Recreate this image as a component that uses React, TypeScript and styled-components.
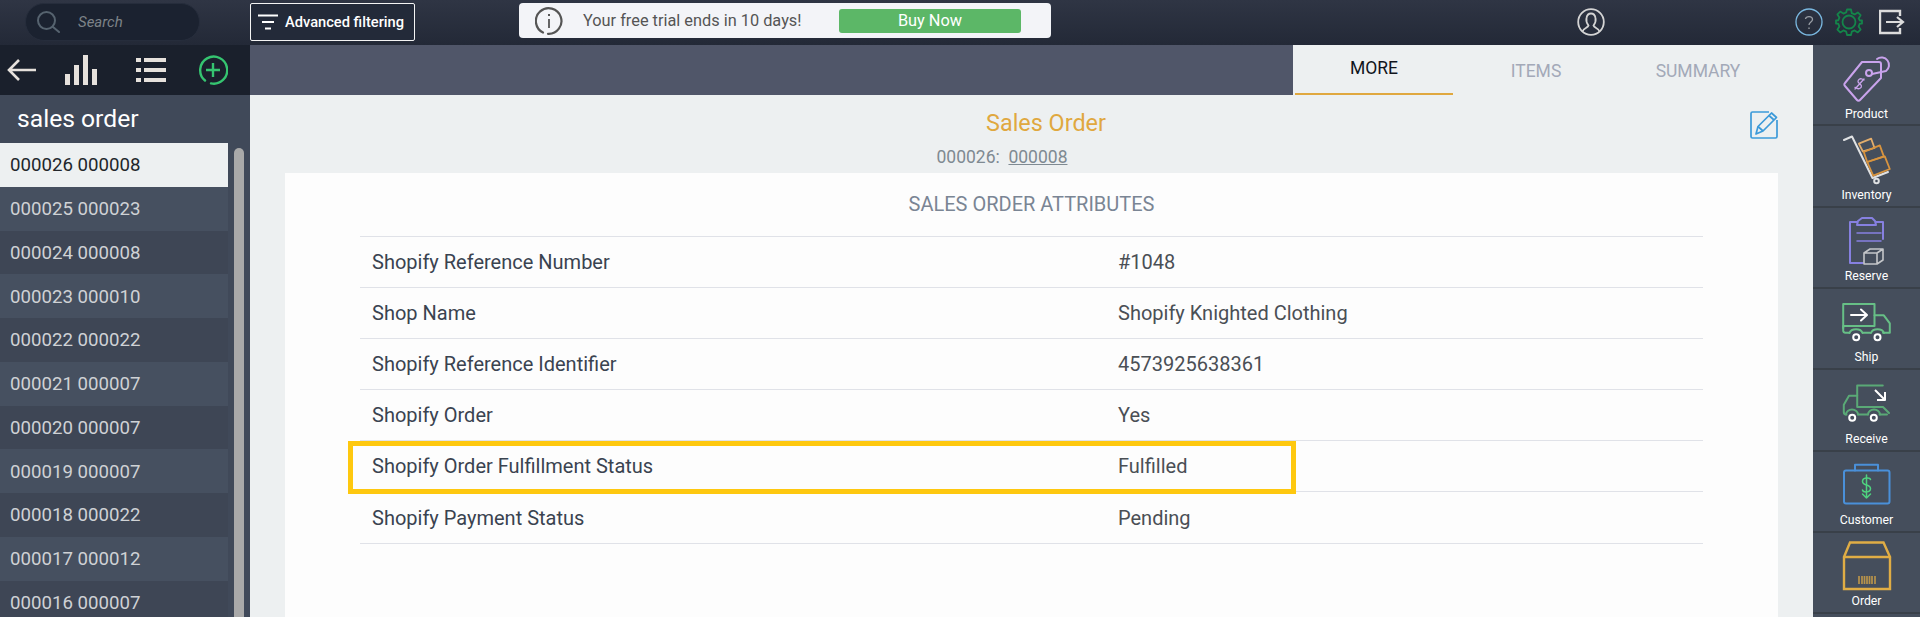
import React from "react";
import styled, { createGlobalStyle } from "styled-components";

const Global = createGlobalStyle`
  html, body { margin: 0; padding: 0; height: 617px; overflow: hidden; background: #edf0f1; }
  body { font-family: Roboto, "Liberation Sans", sans-serif; }
  * { box-sizing: border-box; }
`;

const Page = styled.div`
  width: 1920px;
  height: 617px;
  display: flex;
  flex-direction: column;
  overflow: hidden;
`;

const Header = styled.header`
  height: 45px;
  flex: none;
  display: flex;
  align-items: flex-start;
  background: linear-gradient(#2f3544, #232937);
`;

const SearchPill = styled.div`
  width: 175px;
  height: 38px;
  margin: 3px 0 0 25px;
  border-radius: 19px;
  background: #1b2230;
  border: 1px solid #262d3c;
  display: flex;
  align-items: center;
  padding-left: 10px;
  gap: 18px;
`;

const SearchText = styled.span`
  color: #7d8288;
  font-size: 15px;
  font-style: italic;
`;

const FilterButton = styled.button`
  width: 165px;
  height: 38px;
  margin: 3px 0 0 50px;
  padding: 0 0 0 7px;
  display: flex;
  align-items: center;
  gap: 7px;
  background: #232a39;
  border: 1px solid #f4f4f4;
  border-radius: 2px;
  color: #fff;
  font: 500 14.67px Roboto, sans-serif;
`;

const Banner = styled.div`
  width: 532px;
  height: 35px;
  margin: 3px 0 0 104px;
  padding-left: 16px;
  background: #f3f4f8;
  border-radius: 4px;
  display: flex;
  align-items: center;
`;

const BannerText = styled.span`
  margin-left: 20px;
  width: 256px;
  font-size: 16.33px;
  color: #555;
`;

const BuyButton = styled.button`
  width: 182px;
  height: 24px;
  border: 0;
  border-radius: 3px;
  background: #5cb767;
  color: #fff;
  font: 400 16.33px Roboto, sans-serif;
`;

const HeaderIcon = styled.svg<{ $left: number; $top?: number }>`
  flex: none;
  margin-left: ${(p) => p.$left}px;
  margin-top: ${(p) => p.$top ?? 8}px;
`;

const Body = styled.div`
  flex: 1;
  min-height: 0;
  display: flex;
`;

const Sidebar = styled.aside`
  width: 250px;
  flex: none;
  display: flex;
  flex-direction: column;
  background: #404959;
`;

const SideTools = styled.div`
  height: 50px;
  flex: none;
  background: #1a202c;
  display: flex;
  align-items: center;
`;

const ToolIcon = styled.svg<{ $left: number }>`
  flex: none;
  margin-left: ${(p) => p.$left}px;
`;

const SideTitle = styled.h2`
  height: 48px;
  flex: none;
  margin: 0;
  padding: 6px 0 0 17px;
  font-size: 24.67px;
  line-height: 36px;
  font-weight: 400;
  color: #fff;
`;

const ListArea = styled.div`
  flex: 1;
  min-height: 0;
  display: flex;
  overflow: hidden;
`;

const Rows = styled.div`
  width: 228px;
  flex: none;
`;

const OrderRow = styled.div<{ $selected?: boolean; $dark?: boolean }>`
  height: 43.75px;
  padding: 1px 0 0 10px;
  display: flex;
  align-items: center;
  font-size: 18.67px;
  color: ${(p) => (p.$selected ? "#22262b" : "#cfd2d5")};
  background: ${(p) => (p.$selected ? "#edf0f1" : p.$dark ? "#3e4655" : "#465060")};
`;

const Scrollbar = styled.div`
  width: 10px;
  margin: 5px 0 0 6px;
  height: 600px;
  flex: none;
  background: #a9a9a9;
  border-radius: 5px 5px 0 0;
`;

const Main = styled.main`
  flex: 1;
  min-width: 0;
  display: flex;
  flex-direction: column;
  background: #edf0f1;
`;

const TabBar = styled.div`
  height: 50px;
  flex: none;
  display: flex;
  background: #505669;
  padding-left: 1043px;
`;

const Tabs = styled.div`
  flex: 1;
  display: flex;
  gap: 4px;
  background: #edf0f1;
  padding-left: 2px;
`;

const Tab = styled.div<{ $active?: boolean }>`
  width: 158px;
  height: 50px;
  display: flex;
  align-items: center;
  justify-content: center;
  padding: ${(p) => (p.$active ? "0 0 2px" : "4px 0 0")};
  font-size: 17.5px;
  color: ${(p) => (p.$active ? "#11151c" : "#a3a9b8")};
  border-bottom: 2px solid ${(p) => (p.$active ? "#e0a83f" : "transparent")};
`;

const Heading = styled.div`
  height: 78px;
  flex: none;
  padding: 15px 35px 0;
  display: grid;
  grid-template-columns: 1fr auto 1fr;
  align-items: start;
`;

const HeadingCenter = styled.div`
  grid-column: 2;
  display: flex;
  flex-direction: column;
  align-items: center;
`;

const DocTitle = styled.h1`
  margin: 0 0 0 29px;
  font-size: 23.4px;
  line-height: 26px;
  font-weight: 400;
  color: #e0a83f;
`;

const DocSub = styled.div`
  margin: 12px 59px 0 0;
  font-size: 17.5px;
  line-height: 19px;
  color: #7f8a92;
  white-space: pre;
`;

const DocLink = styled.span`
  text-decoration: underline;
`;

const EditIcon = styled.svg`
  grid-column: 3;
  justify-self: end;
  margin-top: 1px;
`;

const Card = styled.section`
  flex: 1;
  min-height: 0;
  margin: 0 35px;
  padding: 0 75px;
  background: #fdfdfd;
`;

const CardTitle = styled.div`
  height: 63.5px;
  display: flex;
  align-items: center;
  justify-content: center;
  font-size: 20px;
  color: #7a8594;
  border-bottom: 1px solid #e0e2e8;
`;

const AttrTable = styled.div`
  position: relative;
`;

const AttrRow = styled.div`
  height: 51.2px;
  display: grid;
  grid-template-columns: 746px 1fr;
  align-items: center;
  padding-left: 12px;
  font-size: 20px;
  color: #3a4350;
  border-bottom: 1px solid #e0e2e8;
  &:last-of-type {
    border-bottom: 2px solid #dfe3e8;
  }
`;

const AttrValue = styled.span`
  color: #4a4f55;
`;

const Highlight = styled.div<{ $row: number }>`
  position: absolute;
  left: -12px;
  top: ${(p) => p.$row * 51.2 - 0.4}px;
  width: 948px;
  height: 53px;
  border: 5px solid #fec80f;
`;

const Rail = styled.nav`
  width: 107px;
  flex: none;
  background: #454e5c;
`;

const RailItem = styled.div`
  height: 81.33px;
  display: flex;
  flex-direction: column;
  align-items: center;
  border-bottom: 2px solid #394049;
`;

const RailIcon = styled.svg`
  flex: none;
  display: block;
`;

const RailLabel = styled.span`
  font-size: 12.25px;
  font-weight: 400;
  line-height: 16px;
  color: #fff;
  margin-top: 0.5px;
`;

const orders = [
  "000026 000008",
  "000025 000023",
  "000024 000008",
  "000023 000010",
  "000022 000022",
  "000021 000007",
  "000020 000007",
  "000019 000007",
  "000018 000022",
  "000017 000012",
  "000016 000007",
];

const attrs = [
  ["Shopify Reference Number", "#1048"],
  ["Shop Name", "Shopify Knighted Clothing"],
  ["Shopify Reference Identifier", "4573925638361"],
  ["Shopify Order", "Yes"],
  ["Shopify Order Fulfillment Status", "Fulfilled"],
  ["Shopify Payment Status", "Pending"],
];

const Stroke = (c: string, w = 2) => ({ fill: "none", stroke: c, strokeWidth: w, strokeLinejoin: "round" as const, strokeLinecap: "round" as const });

const ProductIcon = () => (
  <RailIcon width="60" height="60" viewBox="0 0 60 60">
    <g {...Stroke("#c9a3ec")}>
      <path d="M25 17H42a2 2 0 0 1 2 2V33L23 55a2 2 0 0 1-3 0L8 41a2 2 0 0 1 0-3Z" />
      <path d="M40 14a7.500 7.500 0 1 1 9 12L35 29" />
      <circle cx="32" cy="28" r="3" />
      <path d="M27 35l-2-1c-2-.8-4 .6-4 2.400 0 2 3 2.600 3.400 4.400.4 2-2.400 3.600-4.400 2.600l-2-1M27 34l-9 10" strokeWidth="1.300" />
    </g>
  </RailIcon>
);

const InventoryIcon = () => (
  <RailIcon width="60" height="60" viewBox="0 0 60 60">
    <g {...Stroke("#dfe1e3")}>
      <path d="M7 14L15 10.500L35.500 52L51 46" />
      <circle cx="39.500" cy="55" r="2.300" />
    </g>
    <g {...Stroke("#d8943f", 1.8)}>
      <path d="M21.800 17.700L34.200 12.700L37.500 22L25.800 25.400Z" stroke="#e2ad6c" />
      <path d="M26.800 26L42.800 19.400L46.800 30.400L30.200 36Z" />
      <path d="M30.200 36L47.800 30.400L52.800 43L36.200 49.700Z" />
    </g>
  </RailIcon>
);

const ReserveIcon = () => (
  <RailIcon width="60" height="60" viewBox="0 0 60 60">
    <g {...Stroke("#8680e0")}>
      <path d="M20 14H13V55H26M39 14H46V31" />
      <path d="M20 17L21 13L25 10H35L38 13L39 17Z" />
      <path d="M20 25H44M20 33H44" strokeWidth="1.500" />
    </g>
    <g {...Stroke("#c4c6c9", 1.6)}>
      <path d="M27 45L33 41H46L40 45ZM27 45V56H40V45M40 56L46 52V41" />
    </g>
  </RailIcon>
);

const ShipIcon = () => (
  <RailIcon width="60" height="60" viewBox="0 0 60 60">
    <g {...Stroke("#67bf86")}>
      <path d="M6.200 39V15H37.500V37H6.200" />
      <path d="M37.500 26.300H46.800L52.800 34.300V43.700H46M33 43.700H26M12.500 43.700H8A2 2 0 0 1 6.200 42V37" />
      <path d="M12.500 44a6.700 5 0 0 1 13 0M34 44a6.700 5 0 0 1 13 0" />
    </g>
    <g {...Stroke("#fff")}>
      <circle cx="19.200" cy="48.300" r="3" />
      <circle cx="40.500" cy="48.300" r="3" />
      <path d="M14 26H29M24 20.500L30 26L24 31.500" />
    </g>
  </RailIcon>
);

const ReceiveIcon = () => (
  <RailIcon width="60" height="60" viewBox="0 0 60 60">
    <g {...Stroke("#5aa976")}>
      <path d="M45.800 15.400H20.200V37H46L52 43" />
      <path d="M20.200 25.700H12L6.800 34.700V42A2.500 2.500 0 0 0 9 44.500H9.500M21 44.500H31M42.500 44.500H50" />
      <path d="M9 44.500a6 5 0 0 1 12 0M31 44.500a6 5 0 0 1 12 0" />
    </g>
    <g {...Stroke("#fff")}>
      <circle cx="15.200" cy="47.700" r="3" />
      <circle cx="36.800" cy="47.700" r="3" />
      <path d="M38 20L48 30M48 22V30H40" strokeLinecap="butt" />
    </g>
  </RailIcon>
);

const CustomerIcon = () => (
  <RailIcon width="60" height="60" viewBox="0 0 60 60">
    <g {...Stroke("#4a90d9")}>
      <rect x="7" y="18.500" width="45.500" height="33" rx="2" />
      <path d="M18 18.500V12.700H41V18.500" />
    </g>
    <g {...Stroke("#4fd27f", 1.5)}>
      <path d="M29.500 23V46M25.500 42L29.500 46L33.500 42" />
      <path d="M33.500 27.500C33 25.500 25.500 25 25.500 29.500C25.500 34 33.500 32 33.500 36.500C33.500 41 26 40.500 25.500 38" />
    </g>
  </RailIcon>
);

const OrderIcon = () => (
  <RailIcon width="60" height="60" viewBox="0 0 60 60">
    <g {...Stroke("#e0ad45", 2.4)} strokeLinejoin="miter">
      <path d="M7 24L13 9.500H46.500L53 24V56H7Z" />
      <path d="M7 24H53" />
    </g>
    <path d="M22 43v8M25 43v8M27.500 43v8M30 43v8M32.500 43v8M35 43v8M38 43v8" stroke="#b8934a" strokeWidth="1.700" />
  </RailIcon>
);

const railItems = [
  ["Product", ProductIcon],
  ["Inventory", InventoryIcon],
  ["Reserve", ReserveIcon],
  ["Ship", ShipIcon],
  ["Receive", ReceiveIcon],
  ["Customer", CustomerIcon],
  ["Order", OrderIcon],
] as const;

export default function App() {
  return (
    <Page>
      <Global />
      <Header>
        <SearchPill>
          <svg width="24" height="24" viewBox="0 0 24 24" fill="none" stroke="#56636f" strokeWidth="2">
            <circle cx="10.500" cy="10.500" r="8.500" />
            <path d="M17 17L23 22" strokeLinecap="round" />
          </svg>
          <SearchText>Search</SearchText>
        </SearchPill>
        <FilterButton>
          <svg width="20" height="17" viewBox="0 0 20 17" stroke="#fff" strokeWidth="2">
            <path d="M0 1.500H20M4 8H16M7 14.500H13" />
          </svg>
          Advanced filtering
        </FilterButton>
        <Banner>
          <svg width="28" height="28" viewBox="0 0 28 28" fill="none" stroke="#555" strokeWidth="2.200">
            <path d="M8 25.500A12.800 12.800 0 1 1 13 26.800" strokeLinecap="round" />
            <path d="M14 12V21" strokeWidth="1.800" />
            <path d="M14 7V9" strokeWidth="2" />
          </svg>
          <BannerText>Your free trial ends in 10 days!</BannerText>
          <BuyButton>Buy Now</BuyButton>
        </Banner>
        <HeaderIcon $left={526} width="28" height="28" viewBox="0 0 28 28" fill="none" stroke="#d4d4d4" strokeWidth="1.800">
          <circle cx="14" cy="14" r="12.800" />
          <path d="M5.500 23.500C6 20 11 20 11.500 17.500C9.500 15 9 12.500 9.500 10C10 7 12 5.500 14 5.500C16 5.500 18 7 18.500 10C19 12.500 18.500 15 16.500 17.500C17 20 22 20 22.500 23.500" />
        </HeaderIcon>
        <HeaderIcon $left={190} width="28" height="28" viewBox="0 0 28 28" fill="none" stroke="#7ab8e0" strokeWidth="1.300">
          <circle cx="14" cy="14" r="13" />
          <path d="M10.500 11C10.500 8 17.500 7.500 17.500 11.500C17.500 14 14 14 14 17" stroke="#9a9fa6" />
          <path d="M14 19.500V21" stroke="#9a9fa6" />
        </HeaderIcon>
        <HeaderIcon $left={12} width="28" height="28" viewBox="0 0 28 28" fill="none" stroke="#14854a" strokeWidth="1.800" strokeLinejoin="round">
          <circle cx="14" cy="14" r="6.500" />
          <path d="M12 1.500H16L16.800 5.200L19.600 6.400L22.800 4.400L25.600 7.200L23.600 10.400L24.800 12.500L27 12.500V15.500L24.800 15.600L23.600 18.400L25.600 21.600L22.800 24.400L19.600 22.400L16.800 23.600L16 27H12L11.200 23.600L8.400 22.400L5.200 24.400L2.400 21.600L4.400 18.400L3.200 15.600L1 15.500V12.500L3.200 12.400L4.400 9.600L2.400 6.400L5.200 3.600L8.400 5.600L11.200 4.400Z" />
        </HeaderIcon>
        <HeaderIcon $left={16} $top={9} width="26" height="26" viewBox="0 0 26 26" fill="none" stroke="#dcdcdc" strokeWidth="2">
          <path d="M21 7V2H1V24H21V19" strokeWidth="2.400" />
          <path d="M7 13H23M18 8L24 13L18 18" strokeWidth="2.200" />
        </HeaderIcon>
      </Header>
      <Body>
        <Sidebar>
          <SideTools>
            <ToolIcon $left={7} width="29" height="24" viewBox="0 0 29 24" fill="none" stroke="#e6e1dc" strokeWidth="2.600">
              <path d="M29 12H2M12 2L2 12L12 22" />
            </ToolIcon>
            <ToolIcon $left={29} width="32" height="30" viewBox="0 0 32 30" fill="#e6e1dc">
              <path d="M0 19h5v11H0zM9 10h5v20H9zM18 0h5v30h-5zM27 14h5v16h-5z" />
            </ToolIcon>
            <ToolIcon $left={39} width="30" height="24" viewBox="0 0 30 24" fill="#e6e1dc">
              <path d="M0 0h5v4H0zM8 0h22v4H8zM0 10h5v4H0zM8 10h22v4H8zM0 20h5v4H0zM8 20h22v4H8z" />
            </ToolIcon>
            <ToolIcon $left={32} width="30" height="30" viewBox="0 0 30 30" fill="none" stroke="#35c470" strokeWidth="2.400">
              <path d="M7 25.500A13.500 13.500 0 1 1 13 28.400" strokeLinecap="round" />
              <path d="M15 8V22M8 15H22" />
            </ToolIcon>
          </SideTools>
          <SideTitle>sales order</SideTitle>
          <ListArea>
            <Rows>
              {orders.map((o, i) => (
                <OrderRow key={o} $selected={i === 0} $dark={i % 2 === 0}>
                  {o}
                </OrderRow>
              ))}
            </Rows>
            <Scrollbar />
          </ListArea>
        </Sidebar>
        <Main>
          <TabBar>
            <Tabs>
              <Tab $active>MORE</Tab>
              <Tab>ITEMS</Tab>
              <Tab>SUMMARY</Tab>
            </Tabs>
          </TabBar>
          <Heading>
            <HeadingCenter>
              <DocTitle>Sales Order</DocTitle>
              <DocSub>
                000026:  <DocLink>000008</DocLink>
              </DocSub>
            </HeadingCenter>
            <EditIcon width="28" height="28" viewBox="0 0 28 28" fill="none" stroke="#3d9ad9" strokeWidth="1.700">
              <path d="M19 1H2.500A1.500 1.500 0 0 0 1 2.500V25.500A1.500 1.500 0 0 0 2.500 27H25.500A1.500 1.500 0 0 0 27 25.500V9" />
              <path d="M6 23L8 15.500L21.500 2L26.500 6.500L13 20Z" strokeLinejoin="round" />
              <path d="M8 15.500L13 20M19 4.500L24 9" />
            </EditIcon>
          </Heading>
          <Card>
            <CardTitle>SALES ORDER ATTRIBUTES</CardTitle>
            <AttrTable>
              {attrs.map(([k, v]) => (
                <AttrRow key={k}>
                  <span>{k}</span>
                  <AttrValue>{v}</AttrValue>
                </AttrRow>
              ))}
              <Highlight $row={4} />
            </AttrTable>
          </Card>
        </Main>
        <Rail>
          {railItems.map(([label, Icon]) => (
            <RailItem key={label}>
              <Icon />
              <RailLabel>{label}</RailLabel>
            </RailItem>
          ))}
        </Rail>
      </Body>
    </Page>
  );
}
